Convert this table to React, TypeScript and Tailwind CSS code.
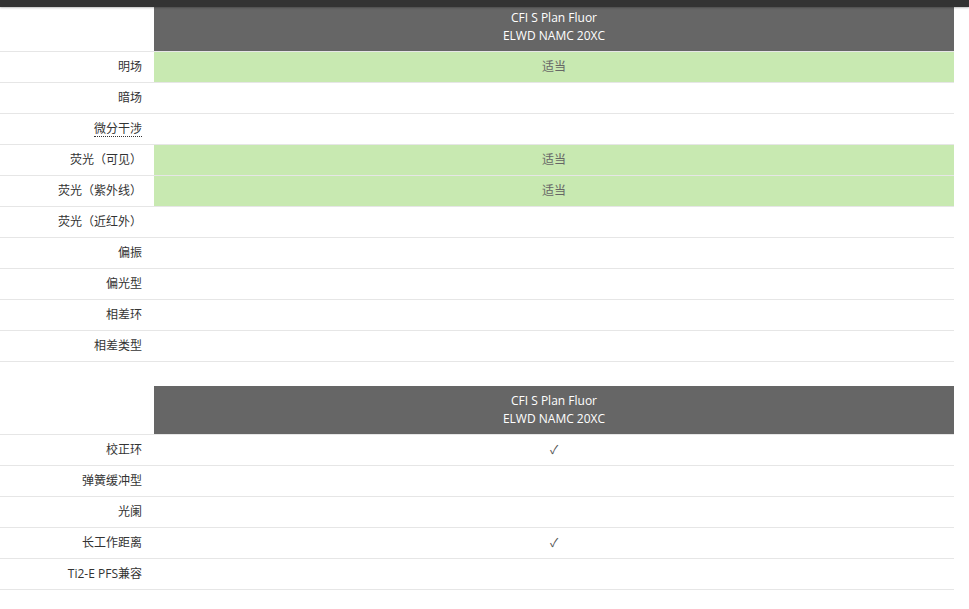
import React from 'react';

type Row = { label: string; value?: string; hint?: boolean };

const imaging: Row[] = [
  { label: '明场', value: '适当' },
  { label: '暗场' },
  { label: '微分干涉', hint: true },
  { label: '荧光（可见）', value: '适当' },
  { label: '荧光（紫外线）', value: '适当' },
  { label: '荧光（近红外）' },
  { label: '偏振' },
  { label: '偏光型' },
  { label: '相差环' },
  { label: '相差类型' },
];

const features: Row[] = [
  { label: '校正环', value: '✓' },
  { label: '弹簧缓冲型' },
  { label: '光阑' },
  { label: '长工作距离', value: '✓' },
  { label: 'Ti2-E PFS兼容' },
];

const SpecTable: React.FC<{ rows: Row[]; green?: boolean }> = ({ rows, green }) => (
  <div className="grid w-[954px] grid-cols-[154px_800px]">
    <div className="h-[49px] border-b border-[#e6e6e6]" />
    <div className="flex h-[49px] flex-col items-center justify-center border-b border-[#e6e6e6] bg-[#666666] pb-[1px] text-[12px] leading-[18px] text-white">
      <span>CFI S Plan Fluor</span>
      <span>ELWD NAMC 20XC</span>
    </div>
    {rows.map((r) => (
      <React.Fragment key={r.label}>
        <div className="flex h-[31px] items-center justify-end border-b border-[#e6e6e6] pr-3 text-[12px] text-[#333333]">
          {r.hint ? (
            <span className="border-b border-dotted border-[#333333] leading-[15px]">{r.label}</span>
          ) : (
            r.label
          )}
        </div>
        <div
          className={
            'flex h-[31px] items-center justify-center border-b border-[#e6e6e6] text-[12px] ' +
            (green && r.value ? 'bg-[#c8e9b1] text-[#666666]' : 'text-[#555555]')
          }
        >
          {r.value}
        </div>
      </React.Fragment>
    ))}
  </div>
);

export default function App() {
  return (
    <div className="relative h-[609px] w-[969px] overflow-hidden bg-white font-['Open_Sans','Noto_Sans_CJK_SC',sans-serif]">
      <div className="absolute left-0 right-0 top-0 z-10 h-[7px] bg-[#333333] shadow-[0_1px_2px_rgba(0,0,0,0.25)]" />
      <div className="flex flex-col gap-6 pt-[3px]">
        <SpecTable rows={imaging} green />
        <SpecTable rows={features} />
      </div>
    </div>
  );
}
